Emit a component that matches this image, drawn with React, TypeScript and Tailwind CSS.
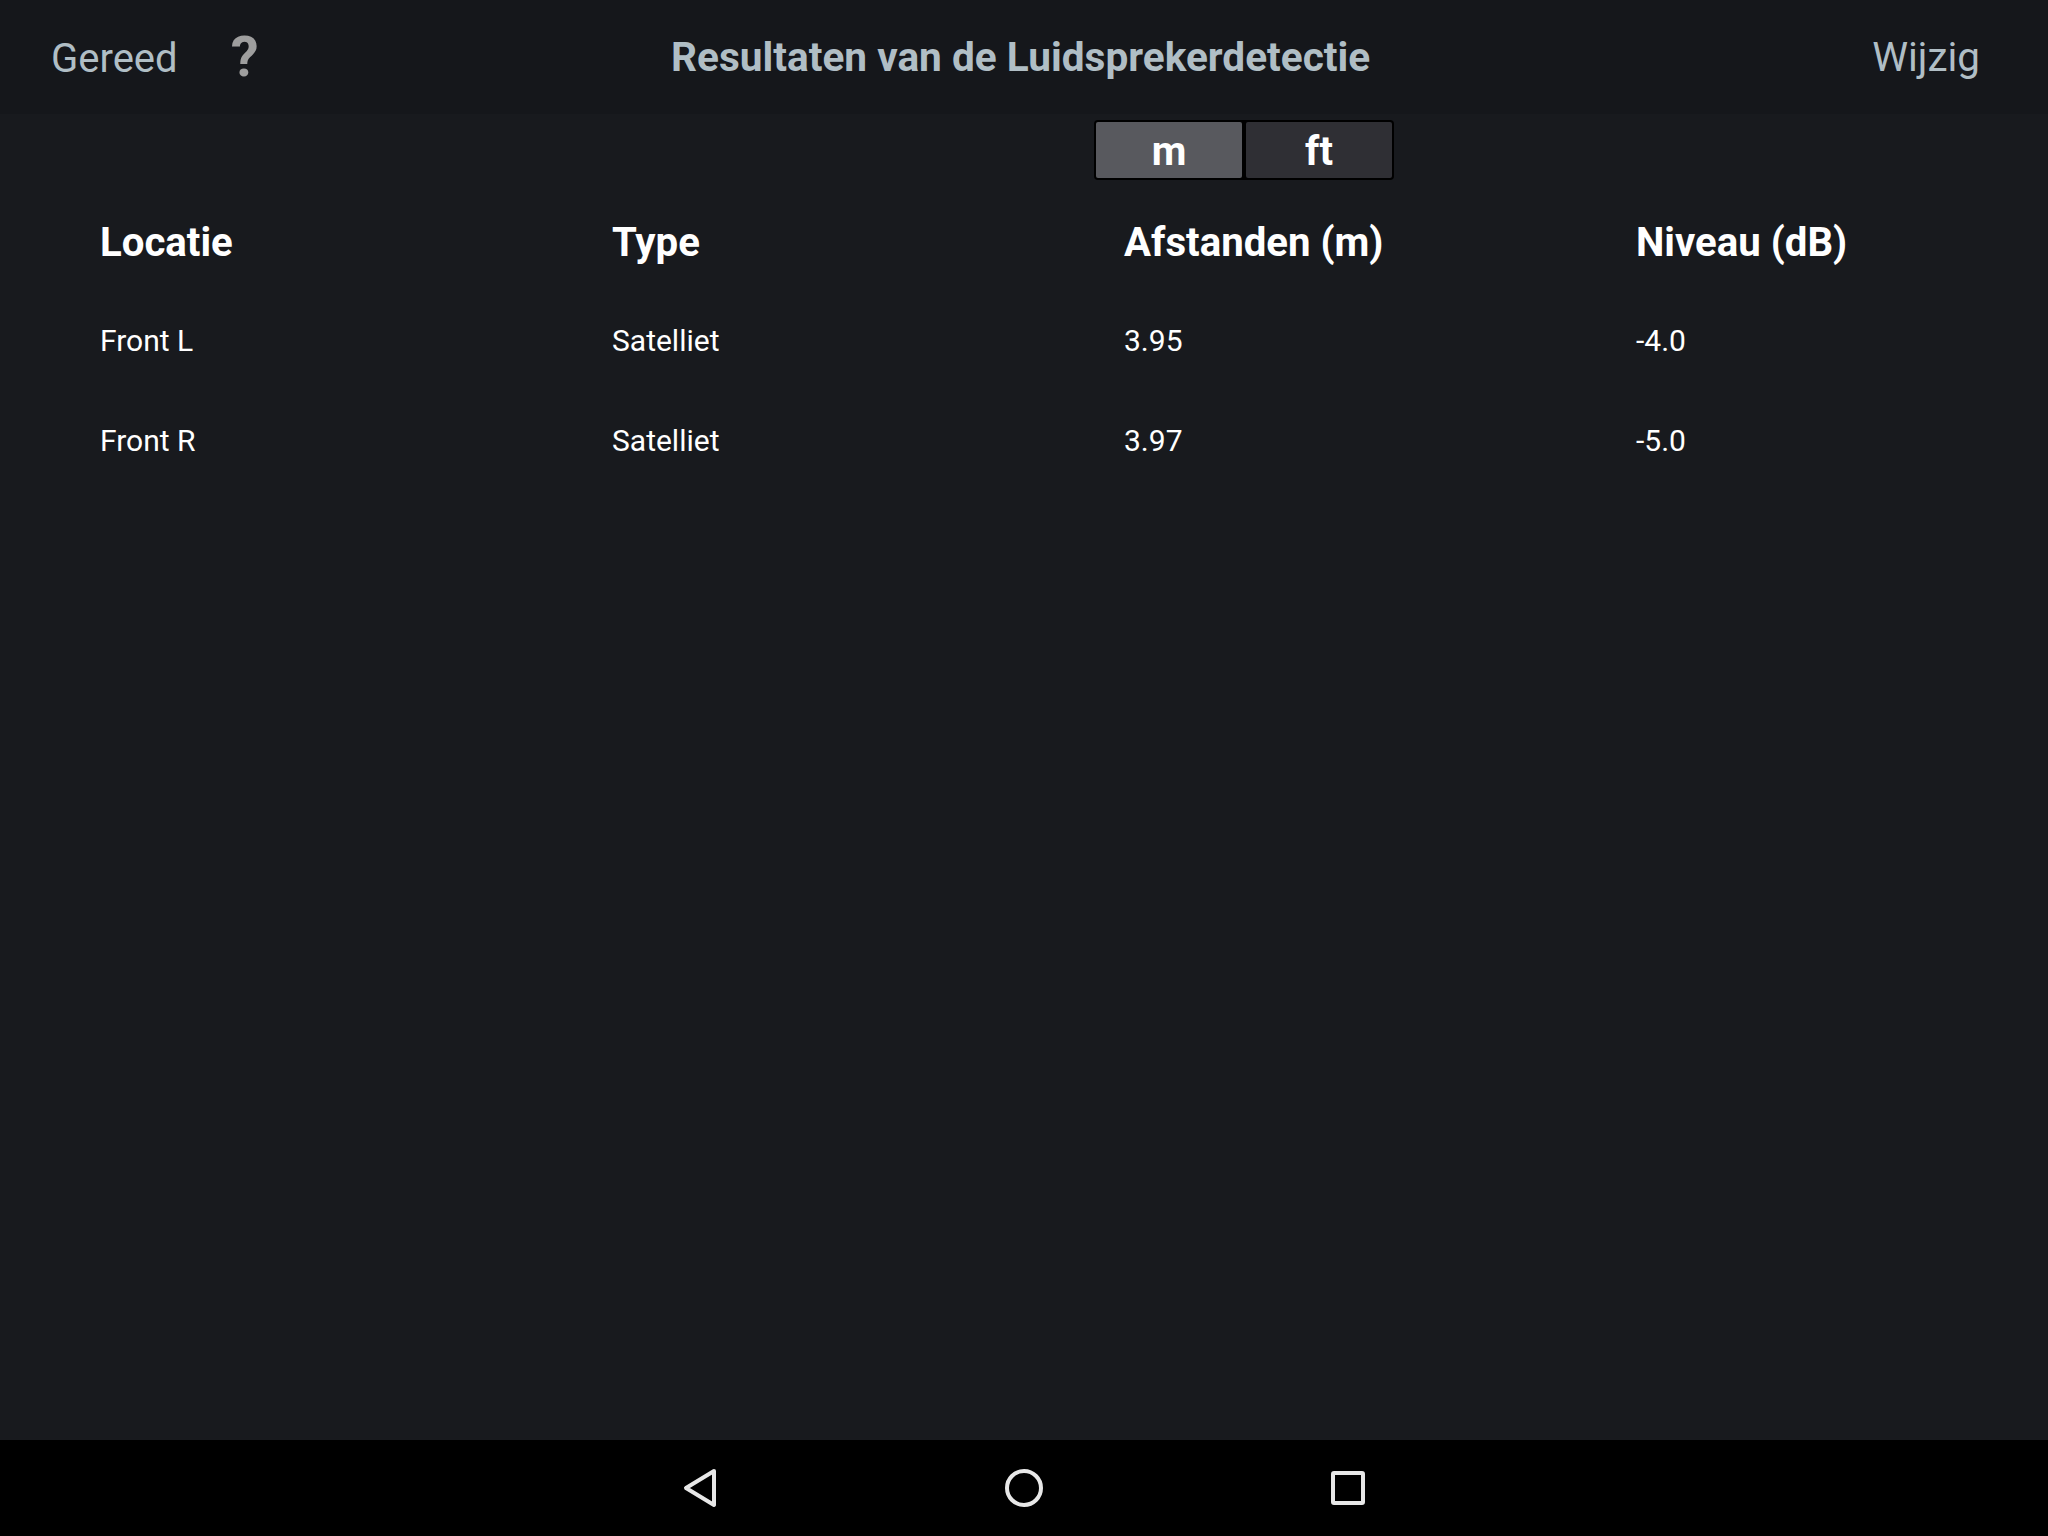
export default function App() {
  const rows = [
    ["Front L", "Satelliet", "3.95", "-4.0"],
    ["Front R", "Satelliet", "3.97", "-5.0"],
  ];
  const headers = ["Locatie", "Type", "Afstanden (m)", "Niveau (dB)"];
  return (
    <div className="flex flex-col w-[2048px] h-[1536px] bg-[#181a1e] font-['Roboto',sans-serif]">
      <div className="flex items-center h-[114px] pl-[51px] pr-[68px] bg-[#15171b] relative text-[#b0bec5] text-[40px]">
        <span className="mt-[3px]">Gereed</span>
        <span className="ml-[53px] text-[#9e9e9e] text-[56px] font-bold">?</span>
        <span className="absolute left-[671px] top-[33px] font-bold text-[40.6px] leading-[48px]">Resultaten van de Luidsprekerdetectie</span>
        <span className="ml-auto mt-[3px] text-[40.4px]">Wijzig</span>
      </div>
      <div className="flex flex-col flex-1">
        <div className="flex ml-[1094px] mt-[6px] h-[60px] w-[300px] bg-black rounded-[4px] p-[2px] gap-[4px] text-white text-[40px] font-bold">
          <div className="flex-1 flex items-center justify-center bg-[#58595e] rounded-[2px] pt-[4px]">m</div>
          <div className="flex-1 flex items-center justify-center bg-[#2f2f34] rounded-[2px] pt-[4px]">ft</div>
        </div>
        <div className="grid grid-cols-[512px_512px_512px_1fr] pl-[100px] mt-[31px] text-white">
          {headers.map((h) => (
            <div key={h} className="h-[64px] mb-[15px] text-[40.2px] font-bold flex items-center">{h}</div>
          ))}
          {rows.map((r) =>
            r.map((c, i) => (
              <div key={r[0] + i} className="h-[100px] text-[30px] flex items-center">{c}</div>
            ))
          )}
        </div>
      </div>
      <div className="flex items-center justify-center h-[96px] bg-black text-[#e8e8e8]">
        <div className="w-[324px] flex justify-center">
          <svg width="34" height="40" viewBox="0 0 34 40" fill="none" stroke="currentColor" strokeWidth="4" strokeLinejoin="round"><path d="M31 3 L3 20 L31 37 Z" /></svg>
        </div>
        <div className="w-[324px] flex justify-center">
          <svg width="38" height="38" viewBox="0 0 38 38" fill="none" stroke="currentColor" strokeWidth="4"><circle cx="19" cy="19" r="17" /></svg>
        </div>
        <div className="w-[324px] flex justify-center">
          <svg width="34" height="34" viewBox="0 0 34 34" fill="none" stroke="currentColor" strokeWidth="4"><rect x="2" y="2" width="30" height="30" rx="1" /></svg>
        </div>
      </div>
    </div>
  );
}
